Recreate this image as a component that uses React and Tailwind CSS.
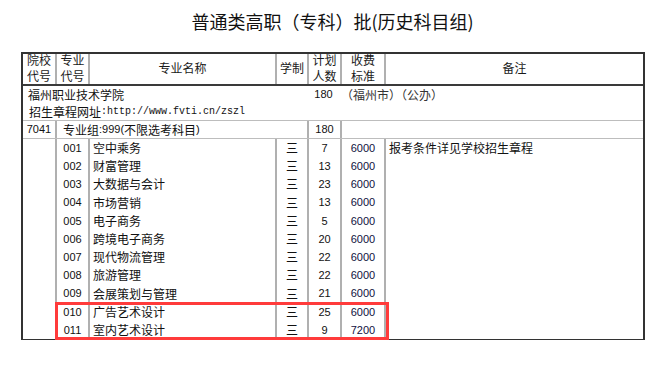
import React from "react";

const rows = [
  ["001", "空中乘务", "7", "6000"],
  ["002", "财富管理", "13", "6000"],
  ["003", "大数据与会计", "23", "6000"],
  ["004", "市场营销", "13", "6000"],
  ["005", "电子商务", "5", "6000"],
  ["006", "跨境电子商务", "20", "6000"],
  ["007", "现代物流管理", "22", "6000"],
  ["008", "旅游管理", "22", "6000"],
  ["009", "会展策划与管理", "21", "6000"],
  ["010", "广告艺术设计", "25", "6000"],
  ["011", "室内艺术设计", "9", "7200"],
];

const V = "border-l-2 border-[#b0b0b0]";

function HeadCell({ w, children, first }) {
  return (
    <div
      className={`${w} ${first ? "" : V} flex items-center justify-center text-center text-[12px] leading-[16px] text-[#1a1a1a]`}
    >
      <div>{children}</div>
    </div>
  );
}

export default function App() {
  return (
    <div className="w-[665px] h-[365px] bg-white font-['Liberation_Sans','Noto_Sans_CJK_SC',sans-serif] text-[#111]">
      <div className="h-[52px] pt-[9px] text-center text-[18px] leading-[24px] text-[#111] font-['Noto_Sans_CJK_SC',sans-serif]">
        普通类高职（专科）批(历史科目组)
      </div>

      <div className="ml-[21px] w-[624px] border-l-2 border-r-2 border-t-2 border-b border-[#333]">
        {/* header */}
        <div className="flex h-[32px] border-b-2 border-[#3a3a3a]">
          <HeadCell w="w-[32px]" first>
            院校<br />代号
          </HeadCell>
          <HeadCell w="w-[33px]">
            专业<br />代号
          </HeadCell>
          <HeadCell w="w-[187px]">专业名称</HeadCell>
          <HeadCell w="w-[32px]">学制</HeadCell>
          <HeadCell w="w-[33px]">
            计划<br />人数
          </HeadCell>
          <HeadCell w="w-[44px]">
            收费<br />标准
          </HeadCell>
          <HeadCell w="flex-1">备注</HeadCell>
        </div>

        {/* school block */}
        <div className="h-[35px] border-b border-[#bdbdbd] flex flex-col">
          <div className="h-[17px] flex items-center">
            <div className="w-[284px] pl-[5px] text-[12px] leading-[17px] font-['Noto_Sans_CJK_SC',sans-serif]">
              福州职业技术学院
            </div>
            <div className="w-[33px] text-center text-[11px] leading-[17px]">180</div>
            <div className="flex-1 pl-[1px] text-[12px] leading-[17px] text-[#333] font-['Noto_Sans_CJK_SC',sans-serif]">
              （福州市）（公办）
            </div>
          </div>
          <div className="h-[18px] flex items-center pl-[6px] text-[12px] leading-[18px]">
            <span className="font-['Noto_Sans_CJK_SC',sans-serif]">招生章程网址</span>
            <span className="font-['Liberation_Mono',monospace] text-[10px]">:http://www.fvti.cn/zszl</span>
          </div>
        </div>

        {/* group row */}
        <div className="h-[18px] border-b border-[#bdbdbd] flex">
          <div className="w-[32px] flex items-center justify-center text-[11px] leading-[17px]">7041</div>
          <div className={`w-[252px] ${V} pl-[6px] flex items-center text-[12px] leading-[17px] whitespace-nowrap`}>
            <span className="font-['Noto_Sans_CJK_SC',sans-serif]">专业组</span>
            <span className="text-[11px]">:999(</span>
            <span className="font-['Noto_Sans_CJK_SC',sans-serif]">不限选考科目</span>
            <span className="text-[11px]">)</span>
          </div>
          <div className={`w-[33px] ${V} flex items-center justify-center text-[11px] leading-[17px]`}>180</div>
          <div className={`flex-1 ${V}`}></div>
        </div>

        {/* data block */}
        <div className="relative h-[200px] flex">
          <div className="w-[32px]"></div>
          <div className="w-[329px] flex flex-col">
            {rows.map((r) => (
              <div key={r[0]} className="flex-1 flex">
                <div className={`w-[33px] ${V} flex items-center justify-center text-[11px]`}>{r[0]}</div>
                <div className={`w-[187px] ${V} flex items-center pl-[3px] text-[12px] font-['Noto_Sans_CJK_SC',sans-serif] leading-none`}>
                  {r[1]}
                </div>
                <div className={`w-[32px] ${V} flex items-center justify-center text-[12px] font-['Noto_Sans_CJK_SC',sans-serif] leading-none`}>
                  三
                </div>
                <div className={`w-[33px] ${V} flex items-center justify-center text-[11px]`}>{r[2]}</div>
                <div className={`w-[44px] ${V} flex items-center justify-center text-[11px] text-[#101040]`}>{r[3]}</div>
              </div>
            ))}
          </div>
          <div className={`flex-1 ${V} pl-[3px]`}>
            <div className="h-[18px] flex items-center text-[12px] font-['Noto_Sans_CJK_SC',sans-serif] leading-none">
              报考条件详见学校招生章程
            </div>
          </div>

          <div className="absolute left-[32px] top-[163px] w-[334px] h-[38px] border-[3px] border-[#ff3b3b]"></div>
        </div>
      </div>
    </div>
  );
}
